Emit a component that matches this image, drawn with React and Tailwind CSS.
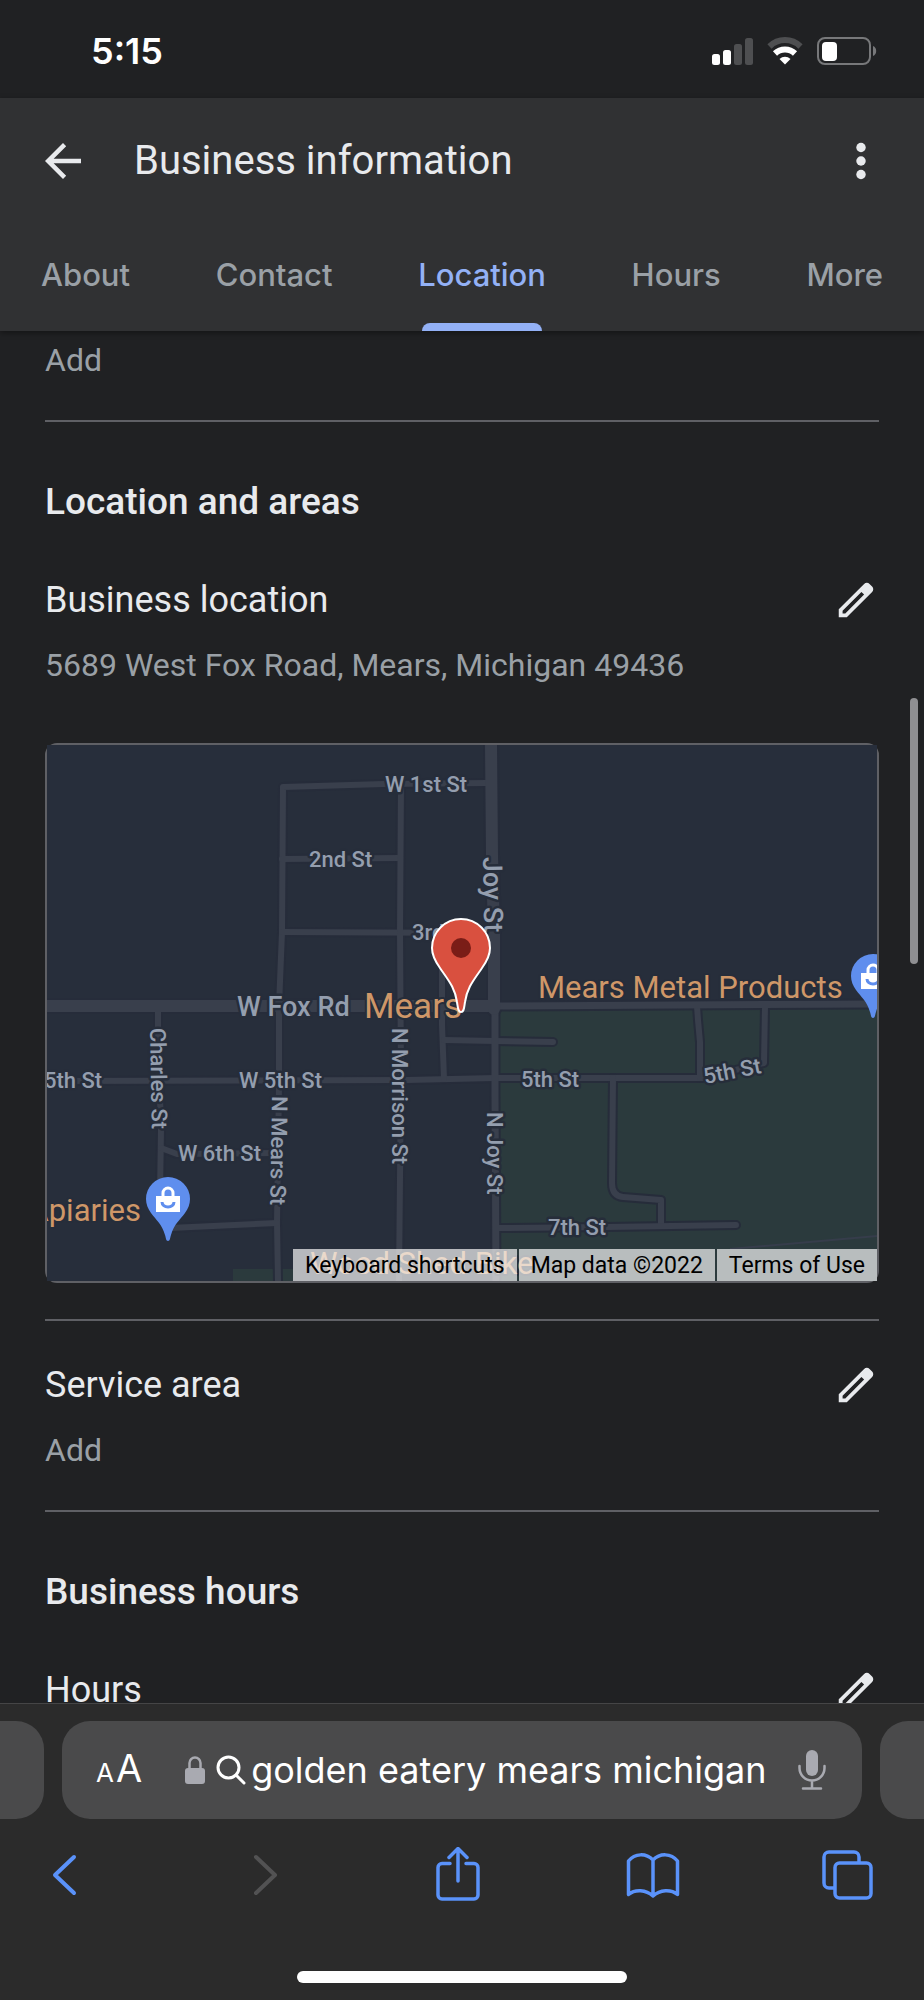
import React, { useState } from "react";

const TABS = ["About", "Contact", "Location", "Hours", "More"];

const ROADS = [
  { d: "M440 38 L337 39 L236 42 L235 187 L232 261 L232 340 L230 478 L231 536" },
  { d: "M235 114 L353 113" },
  { d: "M235 187 L438 188" },
  { d: "M354 39 L353 187 L354 330 L352 536" },
  { d: "M111 261 L111 285 L114 385 L113 450" },
  { d: "M114 403 L130 409 L231 408" },
  { d: "M123 483 L230 478" },
  { d: "M0 336 L360 335 L448 333 L656 333 L717 318 L718 261" },
  { d: "M395 188 L395 280 L397 334" },
  { d: "M397 295 L448 296 L506 297" },
  { d: "M650 261 L651 275 L653 297 L653 333" },
  { d: "M566 333 L565 438 Q565 451 576 452 L614 455 L614 480" },
  { d: "M450 483 L560 482 L689 480" },
  { d: "M448 261 L830 259", w: 7 },
  { d: "M448 261 L448 350 L449 536", w: 7 },
  { d: "M0 261 L448 261", w: 12 },
  { d: "M444 0 L445 110 L447 190 L447 264", w: 12 },
];

const STREETS = [
  { text: "W 1st St", x: 338, y: 47 },
  { text: "2nd St", x: 262, y: 122 },
  { text: "3rd St", x: 365, y: 195 },
  { text: "W Fox Rd", x: 190, y: 271, big: true },
  { text: "Joy St", x: 436, y: 112, rotate: 89, big: true },
  { text: "Charles St", x: 103, y: 283, rotate: 89 },
  { text: "N Mears St", x: 225, y: 351, rotate: 91 },
  { text: "N Morrison St", x: 345, y: 283, rotate: 90 },
  { text: "N Joy St", x: 440, y: 367, rotate: 90 },
  { text: "5th St", x: -3, y: 343 },
  { text: "W 5th St", x: 192, y: 343 },
  { text: "W 6th St", x: 131, y: 416 },
  { text: "5th St", x: 474, y: 342 },
  { text: "5th St", x: 658, y: 339, rotate: -11 },
  { text: "7th St", x: 501, y: 490 },
];

const ShopPin = ({ x, y }) => (
  <g transform={`translate(${x} ${y})`}>
    <path
      d="M0 42 C-2 42 -2 39 -3 36 C-6 25 -12 21 -17 14 C-20 10 -22 5 -22 0 A22 22 0 0 1 22 0 C22 5 20 10 17 14 C12 21 6 25 3 36 C2 39 2 42 0 42 Z"
      fill="#5f8eee"
    />
    <path d="M-5 -2 V-6 a5 5 0 0 1 10 0 V-2" fill="none" stroke="#fff" strokeWidth="3" />
    <path d="M-12 -3 H12 V13 H-12 Z" fill="#fff" />
    <path d="M-6 3 a6 5 0 0 0 12 0" fill="none" stroke="#5f8eee" strokeWidth="3" />
  </g>
);

const AreaMap = () => (
  <svg viewBox="0 0 830 536" className="block w-full" role="img" aria-label="Map of Mears, Michigan">
    <rect width="830" height="536" fill="#272e3b" />
    <path d="M451 263 H830 V536 H451 Z" fill="#2b3a3d" />
    <path d="M186 524 H246 V536 H186 Z" fill="#2b3a3d" />
    <path d="M683 504 L830 491" stroke="#363d4b" strokeWidth="2" />
    <g fill="none" strokeLinecap="round" strokeLinejoin="round">
      {ROADS.map((road) => (
        <path key={road.d} d={road.d} stroke="#262c3a" strokeWidth={(road.w || 6) + 4} />
      ))}
      {ROADS.map((road) => (
        <path key={road.d} d={road.d} stroke="#393f4c" strokeWidth={road.w || 6} />
      ))}
    </g>

    <g
      className="font-[Roboto,sans-serif] font-medium"
      fill="#949eae"
      stroke="#262d3a"
      strokeWidth="5"
      strokeLinejoin="round"
      paintOrder="stroke"
    >
      {STREETS.map((s) => (
        <text
          key={`${s.text}-${s.x}`}
          transform={`translate(${s.x} ${s.y}) rotate(${s.rotate || 0})`}
          fontSize={s.big ? 27 : 22}
        >
          {s.text}
        </text>
      ))}
    </g>

    <g
      className="font-[Roboto,sans-serif]"
      fill="#cf9768"
      stroke="#262d3a"
      strokeWidth="4"
      strokeLinejoin="round"
      paintOrder="stroke"
      fontSize="31"
    >
      <text x="317" y="273" fontSize="35">Mears</text>
      <text x="491" y="253">Mears Metal Products</text>
      <text x="94" y="476" textAnchor="end">Apiaries</text>
      <text x="263" y="529">Wood Shed Bike</text>
    </g>

    <ShopPin x={121} y={454} />
    <ShopPin x={826} y={231} />

    <path
      d="M414 267 C411 267 411 263 410 257 C408 243 402 236 393 223 C388 216 385 210 385 203 A29 29 0 0 1 443 203 C443 210 440 216 435 223 C426 236 420 243 418 257 C417 263 417 267 414 267 Z"
      fill="#d9503f"
      stroke="#fff"
      strokeWidth="2"
    />
    <circle cx="414" cy="203" r="10" fill="#7a1d17" />
  </svg>
);

const EditButton = ({ label }) => (
  <button type="button" aria-label={label} className="shrink-0 text-[#e8eaed]">
    <svg viewBox="0 0 24 24" className="size-[46px]" fill="currentColor">
      <path d="M20.41 4.94l-1.35-1.35c-.78-.78-2.05-.78-2.83 0L3 16.82V21h4.18L20.41 7.77c.79-.78.79-2.05 0-2.83zM6.41 19H5v-1.41l9.82-9.82 1.41 1.41L6.41 19z" />
    </svg>
  </button>
);

const SectionTitle = ({ children }) => (
  <h2 className="pt-14 pb-2.5 text-[37px] leading-[48px] font-medium text-[#e8eaed]">{children}</h2>
);

const InfoRow = ({ label, value, children }) => (
  <section className="pt-10">
    <div className="flex items-center justify-between">
      <h3 className="text-[36px] leading-[48px] text-[#e8eaed]">{label}</h3>
      <EditButton label={`Edit ${label}`} />
    </div>
    {value && <p className="mt-5 text-[32px] leading-[42px] text-[#9aa0a6]">{value}</p>}
    {children}
  </section>
);

const Divider = () => <hr className="border-t-2 border-[#5f6065]" />;

const StatusBar = () => (
  <div className="flex items-center justify-between pt-[26px] pr-[47px] pb-[22px] pl-[91px] text-white">
    <span className="font-[Inter,sans-serif] text-[36px] leading-[50px] font-semibold">5:15</span>
    <div className="flex items-center gap-3.5">
      <svg viewBox="0 0 41 28" className="h-7 w-[41px]" fill="#fff">
        <rect x="0" y="17" width="8" height="11" rx="2.5" />
        <rect x="11" y="13" width="8" height="15" rx="2.5" />
        <rect x="22" y="7" width="8" height="21" rx="2.5" fill="#4e4f51" />
        <rect x="33" y="1" width="8" height="27" rx="2.5" fill="#4e4f51" />
      </svg>
      <svg viewBox="0 0 36 28" className="h-7 w-9" fill="none">
        <path d="M2.500 9.500 A22 22 0 0 1 33.500 9.500" stroke="#4e4f51" strokeWidth="6" />
        <path d="M8 16.500 A14.500 14.500 0 0 1 28 16.500" stroke="#fff" strokeWidth="6" />
        <path d="M12.500 22 A8 8 0 0 1 23.500 22 L18 27.500 Z" fill="#fff" />
      </svg>
      <svg viewBox="0 0 60 28" className="h-7 w-[60px]" fill="none">
        <rect x="1" y="1" width="52" height="26" rx="7" stroke="#77787a" strokeWidth="2" />
        <rect x="5" y="5" width="15" height="19" rx="4" fill="#fff" />
        <path d="M56 9 a5.500 5.500 0 0 1 0 10 Z" fill="#77787a" />
      </svg>
    </div>
  </div>
);

const Header = ({ active, onChange }) => (
  <header className="relative z-10 bg-[#303133] shadow-[0_2px_6px_rgba(0,0,0,0.4)]">
    <div className="flex h-[126px] items-center px-9 text-[#e8eaed]">
      <button type="button" aria-label="Back">
        <svg viewBox="0 0 24 24" className="size-[54px]" fill="currentColor">
          <path d="M20 11H7.830l5.590-5.590L12 4l-8 8 8 8 1.410-1.410L7.830 13H20v-2z" />
        </svg>
      </button>
      <h1 className="ml-11 flex-1 text-[40px] leading-[48px]">Business information</h1>
      <button type="button" aria-label="More options">
        <svg viewBox="0 0 24 24" className="size-[54px]" fill="currentColor">
          <circle cx="12" cy="6" r="2.1" />
          <circle cx="12" cy="12" r="2.1" />
          <circle cx="12" cy="18" r="2.1" />
        </svg>
      </button>
    </div>
    <nav className="flex justify-between px-[41px] pt-[31px]">
      {TABS.map((tab) => (
        <button
          key={tab}
          type="button"
          onClick={() => onChange(tab)}
          className={`flex flex-col font-[Inter,sans-serif] text-[31px] leading-10 font-medium ${
            tab === active ? "text-[#93b1f6]" : "text-[#9aa0a6]"
          }`}
        >
          {tab}
          <span
            className={`mx-1 mt-7 h-2 self-stretch rounded-t-lg ${tab === active ? "bg-[#93b1f6]" : ""}`}
          />
        </button>
      ))}
    </nav>
  </header>
);

const BrowserBar = () => {
  const [query, setQuery] = useState("golden eatery mears michigan");

  return (
    <footer className="relative z-10 border-t border-[#454546] bg-[#2b2b2b] pt-[17px] pb-[17px] font-[Inter,sans-serif]">
      <div className="flex gap-[18px]">
        <div className="w-11 rounded-r-[28px] bg-[#4a4a4b]" />
        <div className="flex h-[98px] min-w-0 flex-1 items-center rounded-[28px] bg-[#4a4a4b] pr-9 pl-[34px] text-white">
          <button type="button" aria-label="Text size" className="flex items-baseline gap-0.5">
            <span className="text-[26px] leading-10">A</span>
            <span className="text-[38px] leading-10">A</span>
          </button>
          <svg viewBox="0 0 20 28" className="ml-[43px] h-7 w-5 shrink-0" fill="#a9aab1">
            <rect x="0" y="12" width="20" height="16" rx="3" />
            <path d="M4.500 13 V7 a5.500 5.500 0 0 1 11 0 V13" fill="none" stroke="#a9aab1" strokeWidth="2.500" />
          </svg>
          <svg
            viewBox="0 0 30 30"
            className="ml-[11px] size-[30px] shrink-0"
            fill="none"
            stroke="#fff"
            strokeWidth="3"
            strokeLinecap="round"
          >
            <circle cx="12.500" cy="12.500" r="10.500" />
            <path d="M20.500 20.500 L28 28" />
          </svg>
          <input
            type="text"
            aria-label="Address"
            value={query}
            onChange={(e) => setQuery(e.target.value)}
            className="ml-[5px] min-w-0 flex-1 bg-transparent text-[36px] leading-[48px] outline-none"
          />
          <button type="button" aria-label="Dictate">
            <svg viewBox="0 0 28 40" className="h-10 w-7" fill="none" stroke="#a9aab1" strokeWidth="2.500" strokeLinecap="round">
              <rect x="8" y="0" width="12" height="26" rx="6" fill="#a9aab1" stroke="none" />
              <path d="M1.500 16 V18 a12.500 12.500 0 0 0 25 0 V16 M14 31 V38 M5 38.500 H23" />
            </svg>
          </button>
        </div>
        <div className="w-11 rounded-l-[28px] bg-[#4a4a4b]" />
      </div>

      <div className="mt-7 flex justify-between pr-12 pl-9 text-[#5a92fa]">
        <button type="button" aria-label="Previous page">
          <svg viewBox="0 0 56 56" className="size-14" fill="none" stroke="currentColor" strokeWidth="4" strokeLinecap="round" strokeLinejoin="round">
            <path d="M38 10 L19 28 L38 46" />
          </svg>
        </button>
        <button type="button" aria-label="Next page" disabled className="text-[#525253]">
          <svg viewBox="0 0 56 56" className="size-14" fill="none" stroke="currentColor" strokeWidth="4" strokeLinecap="round" strokeLinejoin="round">
            <path d="M24 10 L43 28 L24 46" />
          </svg>
        </button>
        <button type="button" aria-label="Share">
          <svg viewBox="0 0 56 56" className="size-14" fill="none" stroke="currentColor" strokeWidth="3.500" strokeLinecap="round" strokeLinejoin="round">
            <path d="M22 16.500 H14 a4 4 0 0 0 -4 4 V48 a4 4 0 0 0 4 4 H46 a4 4 0 0 0 4 -4 V20.500 a4 4 0 0 0 -4 -4 H38" />
            <path d="M30 34 V2 M21 10.500 L30 1.500 L39 10.500" />
          </svg>
        </button>
        <button type="button" aria-label="Bookmarks">
          <svg viewBox="0 0 56 56" className="size-14" fill="none" stroke="currentColor" strokeWidth="3.500" strokeLinecap="round" strokeLinejoin="round">
            <path d="M29 49 C22 42.500 11 42 4.500 47.500 V14 C11 6 22 6 29 13 C36 6 47 6 53.500 14 V47.500 C47 42 36 42.500 29 49 Z M29 13 V49" />
          </svg>
        </button>
        <button type="button" aria-label="Tabs">
          <svg viewBox="0 0 56 56" className="size-14" fill="none" stroke="currentColor" strokeWidth="3.500" strokeLinejoin="round">
            <rect x="15" y="16" width="36" height="35" rx="4.500" />
            <path d="M15 41 H9 a5 5 0 0 1 -5 -5 V10 a5 5 0 0 1 5 -5 H34 a5 5 0 0 1 5 5 V16" />
          </svg>
        </button>
      </div>

      <div className="mx-auto mt-[68px] h-3 w-[330px] rounded-full bg-white" />
    </footer>
  );
};

const App = () => {
  const [tab, setTab] = useState("Location");

  return (
    <div className="flex h-screen flex-col bg-[#202123] font-[Roboto,sans-serif]">
      <StatusBar />
      <Header active={tab} onChange={setTab} />

      <div className="relative flex min-h-0 flex-1 flex-col">
        <main className="min-h-0 flex-1 overflow-y-auto px-[45px] pt-2 [scrollbar-width:none]">
          <p className="mb-[39px] text-[32px] leading-[42px] text-[#9aa0a6]">Add</p>
          <Divider />

          <SectionTitle>Location and areas</SectionTitle>
          <InfoRow label="Business location" value="5689 West Fox Road, Mears, Michigan 49436">
            <div className="relative mt-[57px] mb-9 rounded-xl border-2 border-[#5f6065]">
              <AreaMap />
              <div className="absolute right-0 bottom-0 flex gap-0.5 text-[23px] leading-[30px] text-black">
                <button type="button" className="bg-[#f5f5f5]/70 px-3 pt-0.5">Keyboard shortcuts</button>
                <span className="bg-[#f5f5f5]/70 px-3 pt-0.5">Map data ©2022</span>
                <a href="#terms" className="bg-[#f5f5f5]/70 px-3 pt-0.5">Terms of Use</a>
              </div>
            </div>
          </InfoRow>
          <Divider />

          <div className="pb-[39px]">
            <InfoRow label="Service area" value="Add" />
          </div>
          <Divider />

          <SectionTitle>Business hours</SectionTitle>
          <InfoRow label="Hours" />
        </main>
        <div className="absolute top-[367px] right-1.5 h-[266px] w-2 rounded-full bg-[#8f8f92]" />
      </div>

      <BrowserBar />
    </div>
  );
};

export default App;
